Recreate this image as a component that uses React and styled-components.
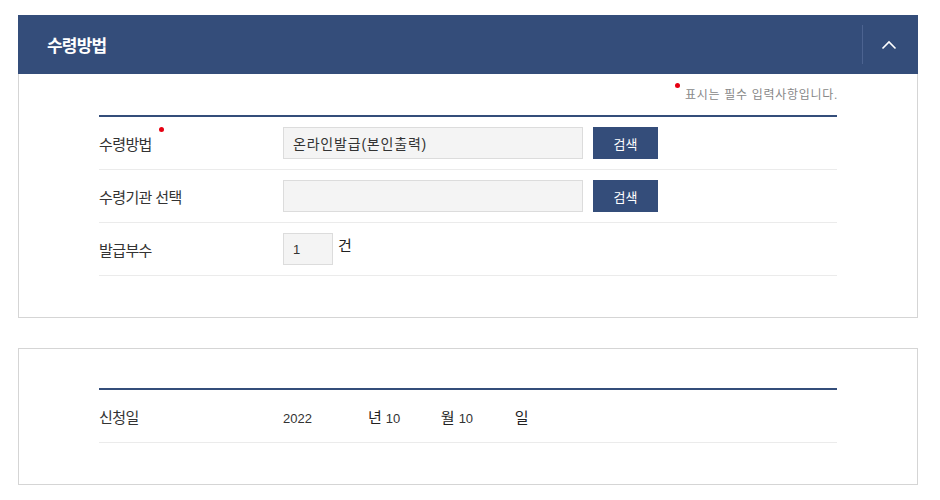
import React from 'react';
import styled, {createGlobalStyle} from 'styled-components';

const GlobalStyle = createGlobalStyle`
  body {
    margin: 0;
    background: #fff;
    font-family: "Liberation Sans", "Noto Sans CJK KR", sans-serif;
    color: #333;
  }
`;

const Page = styled.div`
  padding: 15px 22px 0 18px;
  display: flex;
  flex-direction: column;
  gap: 30px;
`;

const Panel = styled.section`
  width: 900px;
`;

const Header = styled.div`
  height: 59px;
  background: #344d7a;
  display: flex;
  align-items: center;
  justify-content: space-between;
`;

const Title = styled.h2`
  margin: 0 0 0 29px;
  font-size: 17px;
  font-weight: 700;
  letter-spacing: -0.8px;
  color: #fff;
`;

const Toggle = styled.button`
  width: 56px;
  height: 39px;
  border: 0;
  border-left: 1px solid #4c6390;
  background: transparent;
  display: flex;
  align-items: center;
  justify-content: center;
  padding: 0 4px 0 0;
  cursor: pointer;
`;

const Body = styled.div`
  border: 1px solid #d5d5d5;
  border-top: ${props => props.open ? '0' : '1px solid #d5d5d5'};
  padding: ${props => props.open ? '12px 80px 41px' : '39px 80px 41px'};
`;

const Note = styled.p`
  margin: 0 -1px 11px 0;
  text-align: right;
  font-size: 12px;
  letter-spacing: 0.7px;
  color: #888;
  line-height: 18px;
`;

const Dot = styled.span`
  display: inline-block;
  width: 5px;
  height: 5px;
  border-radius: 50%;
  background: #e60012;
  vertical-align: top;
  margin: ${props => props.small ? '-3px 5px 0 0' : '-6px 0 0 7px'};
`;

const Table = styled.div`
  border-top: 2px solid #344d7a;
`;

const Row = styled.div`
  display: grid;
  grid-template-columns: 184px 1fr;
  align-items: center;
  height: 52px;
  border-bottom: 1px solid #ebebeb;
`;

const Label = styled.div`
  font-size: 15px;
  letter-spacing: -0.6px;
  color: #333;
`;

const Field = styled.div`
  display: flex;
  align-items: ${props => props.top ? 'flex-start' : 'center'};
  gap: ${props => props.gap || 10}px;
`;

const Input = styled.div`
  box-sizing: border-box;
  width: ${props => props.w}px;
  height: 32px;
  background: #f4f4f4;
  border: 1px solid #dcdcdc;
  padding-left: 9px;
  display: flex;
  align-items: center;
  font-size: ${props => props.num ? 13 : 14}px;
  letter-spacing: ${props => props.num ? 0 : 0.8}px;
  color: #333;
`;

const Button = styled.button`
  width: 65px;
  height: 32px;
  border: 0;
  background: #344d7a;
  color: #fff;
  font-family: inherit;
  font-size: 13px;
`;

const Unit = styled.span`
  font-size: 15px;
  line-height: 26px;
  color: #222;
`;

const DateValue = styled.span`
  display: inline-block;
  width: ${props => props.w}px;
  font-size: 13px;
  color: #333;
`;

const DateUnit = styled.span`
  display: inline-block;
  font-size: 15px;
  color: #222;
  margin-right: 4px;
`;

const DateWrap = styled.div`
  display: flex;
  align-items: baseline;
`;

function ChevronUp() {
  return (
    <svg width="16" height="10" viewBox="0 0 16 10" fill="none">
      <path d="M1.5 8.5 L8 2 L14.5 8.5" stroke="#fff" strokeWidth="1.6" />
    </svg>
  );
}

export default function App() {
  return (
    <>
      <GlobalStyle />
      <Page>
        <Panel>
          <Header>
            <Title>수령방법</Title>
            <Toggle aria-label="접기"><ChevronUp /></Toggle>
          </Header>
          <Body open>
            <Note><Dot small />표시는 필수 입력사항입니다.</Note>
            <Table>
              <Row>
                <Label>수령방법<Dot /></Label>
                <Field>
                  <Input w={300}>온라인발급(본인출력)</Input>
                  <Button>검색</Button>
                </Field>
              </Row>
              <Row>
                <Label>수령기관 선택</Label>
                <Field>
                  <Input w={300} />
                  <Button>검색</Button>
                </Field>
              </Row>
              <Row>
                <Label>발급부수</Label>
                <Field top gap={5}>
                  <Input w={50} num>1</Input>
                  <Unit>건</Unit>
                </Field>
              </Row>
            </Table>
          </Body>
        </Panel>
        <Panel>
          <Body>
            <Table>
              <Row>
                <Label>신청일</Label>
                <DateWrap>
                  <DateValue w={85}>2022</DateValue>
                  <DateUnit>년</DateUnit>
                  <DateValue w={55}>10</DateValue>
                  <DateUnit>월</DateUnit>
                  <DateValue w={56}>10</DateValue>
                  <DateUnit>일</DateUnit>
                </DateWrap>
              </Row>
            </Table>
          </Body>
        </Panel>
      </Page>
    </>
  );
}
